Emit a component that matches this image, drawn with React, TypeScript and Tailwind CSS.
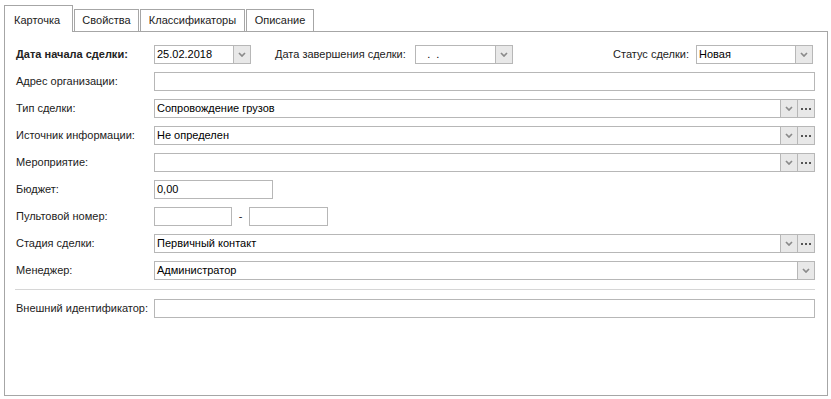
import React from "react";

const font = { fontFamily: '"Liberation Sans", Arial, sans-serif' };

const Chevron = () => (
  <svg width="8" height="5" viewBox="0 0 8 5" className="text-[#8a8a8a]">
    <path d="M1 1 L4 4 L7 1" fill="none" stroke="currentColor" strokeWidth="1.7" />
  </svg>
);

const Dots = () => (
  <svg width="11" height="3" viewBox="0 0 11 3" className="text-[#555]">
    <rect x="0" y="1" width="2" height="2" fill="currentColor" />
    <rect x="4" y="1" width="2" height="2" fill="currentColor" />
    <rect x="8" y="1" width="2" height="2" fill="currentColor" />
  </svg>
);

type FieldProps = {
  value?: string;
  combo?: boolean;
  more?: boolean;
  className?: string;
};

const Field = ({ value = "", combo, more, className = "" }: FieldProps) => (
  <div className={"flex h-[19px] border border-[#b7b7b7] bg-white " + className}>
    <div className="flex-1 px-[2px] text-[11px] leading-[17px] text-black whitespace-pre overflow-hidden">
      {value}
    </div>
    {combo && (
      <div className="w-[17px] shrink-0 border-l border-[#b7b7b7] bg-[#e8e8e8] flex items-center justify-center">
        <Chevron />
      </div>
    )}
    {more && (
      <div className="w-[17px] shrink-0 border-l border-[#b7b7b7] bg-[#e8e8e8] flex items-center justify-center">
        <Dots />
      </div>
    )}
  </div>
);

const Label = ({ children, bold }: { children: React.ReactNode; bold?: boolean }) => (
  <div
    className={
      "w-[138px] shrink-0 text-[11px] text-[#222] whitespace-nowrap " +
      (bold ? "font-bold" : "")
    }
  >
    {children}
  </div>
);

const Row = ({ label, children }: { label: string; children: React.ReactNode }) => (
  <div className="flex items-center h-[19px]">
    <Label>{label}</Label>
    {children}
  </div>
);

const tabs = ["Свойства", "Классификаторы", "Описание"];
const tabWidths = ["w-[65px]", "w-[105px]", "w-[68px]"];

export default function App() {
  return (
    <div className="w-[831px] h-[399px] bg-white pl-[4px] pr-[3px]" style={font}>
      {/* ---------------------------- tabs ---------------------------- */}
      <div className="flex items-end h-[31px] pt-[5px]">
        <div className="relative z-10 -mb-px w-[69px] h-[27px] border border-b-0 border-[#a6a6a6] bg-white text-[11px] text-[#222] pl-[9px] pt-[6px]">
          Карточка
        </div>
        {tabs.map((t, i) => (
          <div
            key={t}
            className={
              "h-[22px] border border-b-0 border-[#a6a6a6] bg-white text-[11px] text-[#222] flex items-center justify-center ml-px " +
              tabWidths[i]
            }
          >
            {t}
          </div>
        ))}
      </div>

      {/* ---------------------------- panel ---------------------------- */}
      <div className="h-[365px] border border-[#a6a6a6] pt-[13px] pl-[11px] pr-[12px]">
        <div className="flex flex-col gap-[8px]">
          <div className="flex items-center h-[19px]">
            <Label bold>Дата начала сделки:</Label>
            <Field value="25.02.2018" combo className="w-[97px]" />
            <div className="ml-[24px] w-[140px] shrink-0 text-[11px] text-[#222] whitespace-nowrap">
              Дата завершения сделки:
            </div>
            <Field value="   .  ." combo className="w-[98px]" />
            <div className="flex-1" />
            <div className="text-[11px] text-[#222] whitespace-nowrap mr-[7px]">
              Статус сделки:
            </div>
            <Field value="Новая" combo className="w-[117px] mr-[2px]" />
          </div>

          <Row label="Адрес организации:">
            <Field className="flex-1" />
          </Row>
          <Row label="Тип сделки:">
            <Field value="Сопровождение грузов" combo more className="flex-1" />
          </Row>
          <Row label="Источник информации:">
            <Field value="Не определен" combo more className="flex-1" />
          </Row>
          <Row label="Мероприятие:">
            <Field combo more className="flex-1" />
          </Row>
          <Row label="Бюджет:">
            <Field value="0,00" className="w-[119px]" />
          </Row>
          <Row label="Пультовой номер:">
            <Field className="w-[78px]" />
            <div className="w-[17px] text-center text-[11px] text-[#222]">-</div>
            <Field className="w-[79px]" />
          </Row>
          <Row label="Стадия сделки:">
            <Field value="Первичный контакт" combo more className="flex-1" />
          </Row>
          <Row label="Менеджер:">
            <Field value="Администратор" combo className="flex-1" />
          </Row>
        </div>

        <div className="mt-[9px] -ml-px h-px bg-[#d6d6d6]" />

        <div className="mt-[9px]">
          <Row label="Внешний идентификатор:">
            <Field className="flex-1" />
          </Row>
        </div>
      </div>
    </div>
  );
}
